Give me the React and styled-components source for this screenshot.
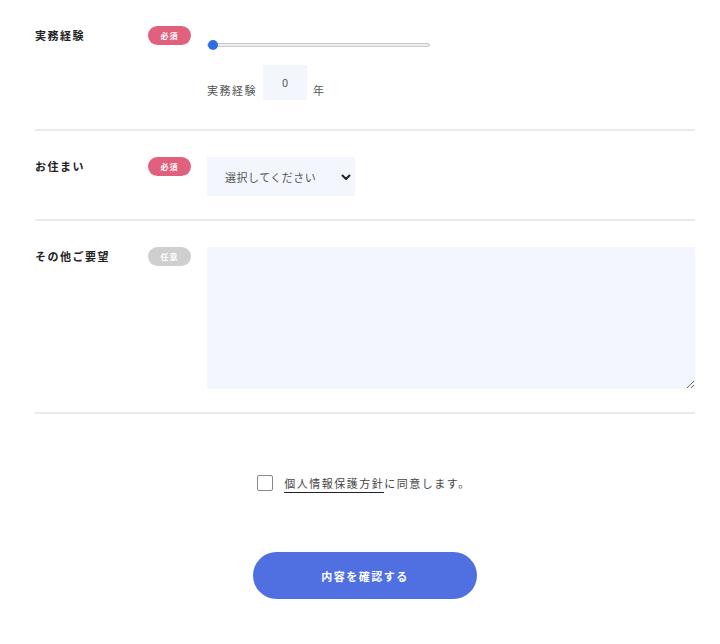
import styled, { createGlobalStyle } from "styled-components";

const GlobalStyle = createGlobalStyle`
    body {
        margin: 0;
        background: #fff;
        font-family: "Noto Sans CJK JP", "Noto Sans", sans-serif;
        color: #333;
    }
`

export default function App() {
    return (
        <>
            <GlobalStyle />
            <Page>
                <Row>
                    <Label>実務経験</Label>
                    <Badge>必須</Badge>
                    <Field>
                        <Range type="range" min="0" max="40" defaultValue="0" />
                        <YearsLine>
                            <SmallText>実務経験</SmallText>
                            <NumberBox>0</NumberBox>
                            <SmallText>年</SmallText>
                        </YearsLine>
                    </Field>
                </Row>
                <Row>
                    <Label>お住まい</Label>
                    <Badge>必須</Badge>
                    <Field>
                        <Select>
                            <span>選択してください</span>
                            <svg width="12" height="12" viewBox="0 0 24 24" fill="none" stroke="#222" strokeWidth="4" strokeLinecap="round" strokeLinejoin="round">
                                <polyline points="5 9 12 16 19 9" />
                            </svg>
                        </Select>
                    </Field>
                </Row>
                <Row>
                    <Label>その他ご要望</Label>
                    <Badge $optional>任意</Badge>
                    <Field>
                        <TextArea />
                    </Field>
                </Row>
                <Agree>
                    <CheckBox />
                    <AgreeText>
                        <a href="/">個人情報保護方針</a>に同意します。
                    </AgreeText>
                </Agree>
                <Submit>内容を確認する</Submit>
            </Page>
        </>
    )
}

const Page = styled.div`
    width: 660px;
    margin-left: 35px;
    padding-bottom: 44px;
    display: flex;
    flex-direction: column;
    align-items: center;
`

const Row = styled.div`
    width: 100%;
    display: grid;
    grid-template-columns: 113px 59px 1fr;
    align-items: start;
    padding: 26px 0 23px;
    border-bottom: 2px solid #e9e9e9;

    &:first-child{
        padding-bottom: 29px;
    }
`

const Label = styled.div`
    font-size: 11px;
    font-weight: 700;
    letter-spacing: 1.5px;
    line-height: 16px;
    color: #222;
    padding-top: 1px;
`

const Badge = styled.div`
    width: 43px;
    height: 19px;
    border-radius: 10px;
    background: ${p => p.$optional ? "#cfcfcf" : "#e0607e"};
    color: #fff;
    font-size: 8px;
    font-weight: 700;
    letter-spacing: 1px;
    display: flex;
    justify-content: center;
    align-items: center;
`

const Field = styled.div`
    display: flex;
    flex-direction: column;
    align-items: flex-start;
`

const Range = styled.input`
    appearance: none;
    -webkit-appearance: none;
    width: 223px;
    height: 10px;
    margin: 14px 0 0;
    background: transparent;

    &::-webkit-slider-runnable-track{
        height: 4px;
        background: #ececec;
        border: 1px solid #c9c9c9;
        border-radius: 3px;
    }

    &::-webkit-slider-thumb{
        -webkit-appearance: none;
        width: 10px;
        height: 10px;
        margin-top: -4px;
        border-radius: 50%;
        background: #2f6de6;
        border: none;
    }
`

const YearsLine = styled.div`
    display: flex;
    align-items: flex-end;
    gap: 6px;
    margin-top: 15px;
`

const SmallText = styled.span`
    font-size: 11px;
    letter-spacing: 1.5px;
    line-height: 16px;
    color: #555;
    padding-bottom: 2px;
`

const NumberBox = styled.div`
    width: 44px;
    height: 35px;
    box-sizing: border-box;
    padding-bottom: 2px;
    background: #f3f6fd;
    font-size: 11px;
    color: #555;
    display: flex;
    justify-content: center;
    align-items: center;
`

const Select = styled.div`
    width: 148px;
    height: 39px;
    box-sizing: border-box;
    padding: 0 3px 0 18px;
    background: #f3f6fd;
    display: flex;
    justify-content: space-between;
    align-items: center;
    font-size: 11px;
    color: #555;
    letter-spacing: 0.5px;
`

const TextArea = styled.textarea`
    width: 488px;
    height: 142px;
    box-sizing: border-box;
    border: none;
    background: #f3f6fd;
    resize: vertical;
    outline: none;
`

const Agree = styled.div`
    display: flex;
    align-items: center;
    gap: 11px;
    margin-top: 60px;
    margin-left: -2px;
`

const CheckBox = styled.div`
    width: 16px;
    height: 16px;
    box-sizing: border-box;
    border: 1.5px solid #888;
    border-radius: 2px;
`

const AgreeText = styled.div`
    font-size: 11px;
    letter-spacing: 1.5px;
    color: #444;
    line-height: 18px;

    a{
        color: #444;
        text-decoration: none;
        border-bottom: 1px solid #222;
        padding-bottom: 1px;
    }
`

const Submit = styled.button`
    width: 224px;
    height: 47px;
    margin-top: 60px;
    border: none;
    border-radius: 24px;
    background: #5070e2;
    color: #fff;
    font-family: inherit;
    font-size: 11px;
    font-weight: 700;
    letter-spacing: 1.5px;
`
